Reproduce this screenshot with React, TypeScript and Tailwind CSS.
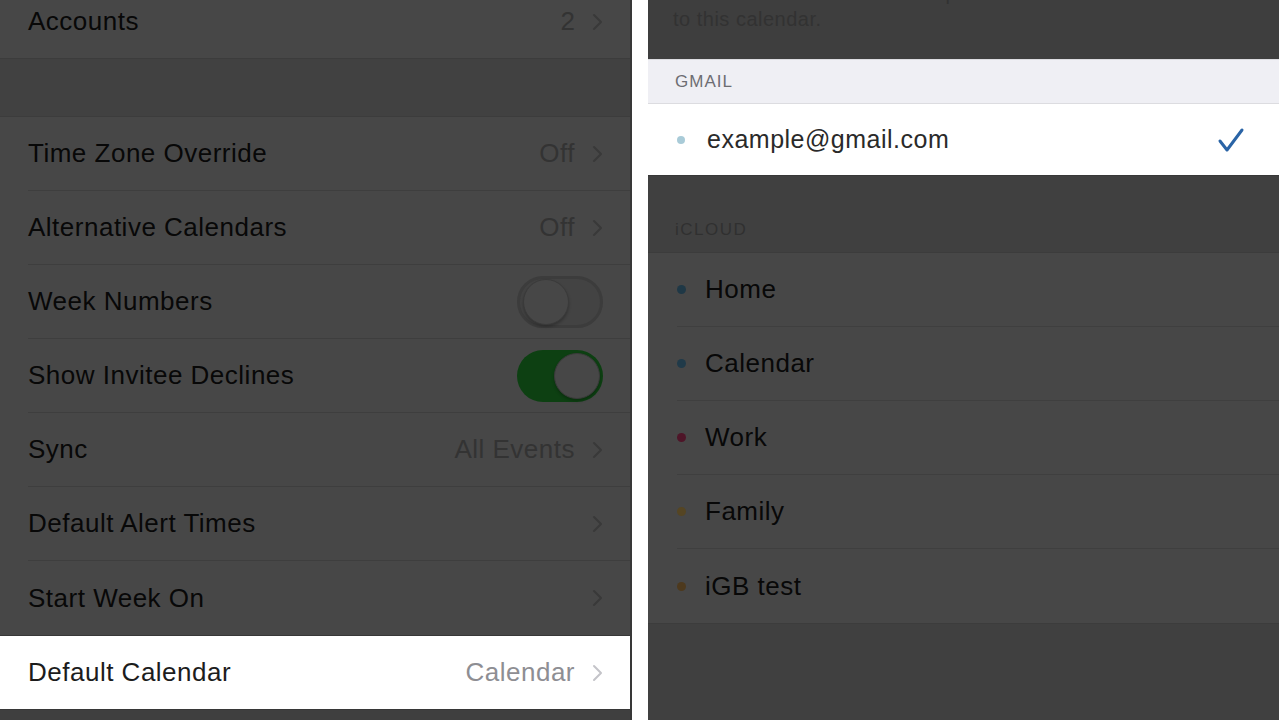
const FONT = { fontFamily: '"Liberation Sans", Arial, sans-serif' };

function Chevron({ color }: { color: string }) {
  return (
    <svg width="11" height="18" viewBox="0 0 11 18" className="ml-[17px] shrink-0">
      <polyline points="2,2 9,9 2,16" fill="none" stroke={color} strokeWidth="2" strokeLinecap="round" strokeLinejoin="round" />
    </svg>
  );
}

function Toggle({ on }: { on: boolean }) {
  return (
    <div
      className={
        "w-[86px] h-[52px] rounded-full p-[3px] flex items-center " +
        (on ? "bg-[#0d4012] justify-end" : "bg-[#434343] border-[3px] border-[#3c3c3c] justify-start")
      }
    >
      <div className="w-[46px] h-[46px] rounded-full bg-[#474747] border border-[#3a3a3a] shadow-[0_2px_3px_rgba(0,0,0,0.25)]" />
    </div>
  );
}

interface Row {
  label: string;
  detail?: string;
  chevron?: boolean;
  toggle?: boolean;
}

const rows: Row[] = [
  { label: "Time Zone Override", detail: "Off", chevron: true },
  { label: "Alternative Calendars", detail: "Off", chevron: true },
  { label: "Week Numbers", toggle: false },
  { label: "Show Invitee Declines", toggle: true },
  { label: "Sync", detail: "All Events", chevron: true },
  { label: "Default Alert Times", chevron: true },
  { label: "Start Week On", chevron: true },
];

function SettingsRow({ row, last }: { row: Row; last?: boolean }) {
  return (
    <div className="h-[74px] bg-[#474747] pl-[28px] flex shrink-0">
      <div
        className={
          "flex-1 flex items-center pr-[27px] " + (last ? "" : "border-b border-[#3e3e3e]")
        }
      >
        <span className="flex-1 text-[26px] tracking-[0.5px] text-[#080808]">{row.label}</span>
        {row.detail && <span className="text-[26px] tracking-[0.5px] text-[#333333]">{row.detail}</span>}
        {row.chevron && <Chevron color="#393939" />}
        {row.toggle !== undefined && <Toggle on={row.toggle} />}
      </div>
    </div>
  );
}

const calendars = [
  { name: "Home", color: "#1f3846" },
  { name: "Calendar", color: "#203a49" },
  { name: "Work", color: "#4e1528" },
  { name: "Family", color: "#554523" },
  { name: "iGB test", color: "#4d391d" },
];

export default function App() {
  return (
    <div className="w-[1279px] h-[720px] flex overflow-hidden bg-white" style={FONT}>
      {/* left: calendar settings */}
      <div className="w-[630px] h-full bg-[#3f3f3f] flex flex-col overflow-hidden">
        <div className="h-[74px] -mt-[15px] shrink-0 bg-[#474747] pl-[28px] pr-[27px] flex items-center border-b border-[#3c3c3c]">
          <span className="flex-1 text-[26px] tracking-[0.5px] text-[#080808]">Accounts</span>
          <span className="text-[26px] text-[#333333]">2</span>
          <Chevron color="#393939" />
        </div>
        <div className="h-[58px] bg-[#414141] border-b border-[#3c3c3c] shrink-0" />
        {rows.map((r, i) => (
          <SettingsRow key={r.label} row={r} last={i === rows.length - 1} />
        ))}
        <div className="h-[74px] bg-white pl-[28px] pr-[27px] flex items-center border-t border-[#373737] shrink-0">
          <span className="flex-1 text-[26px] tracking-[0.5px] text-[#1c1c1c]">Default Calendar</span>
          <span className="text-[26px] tracking-[0.5px] text-[#8e8e93]">Calendar</span>
          <Chevron color="#c4c4c9" />
        </div>
        <div className="flex-1 bg-[#3f3f3f] border-t border-[#373737]" />
      </div>

      {/* divider */}
      <div className="w-[18px] h-full bg-white border-l-2 border-[#383838]" />

      {/* right: default calendar picker */}
      <div className="flex-1 h-full bg-[#404040] flex flex-col overflow-hidden">
        <div className="h-[59px] shrink-0 bg-[#3e3e3e] pl-[25px] pr-[30px] overflow-hidden">
          <p className="-mt-[20px] text-[20px] tracking-[0.5px] leading-[26px] text-[#323232] whitespace-nowrap">
            Events created outside of a specific calendar will default
            <br />
            to this calendar.
          </p>
        </div>
        <div className="h-[45px] shrink-0 bg-[#efeff4] pl-[27px] flex items-center border-y border-[#dcdce0]">
          <span className="text-[17px] tracking-[1px] text-[#6d6d72]">GMAIL</span>
        </div>
        <div className="h-[72px] shrink-0 bg-white pl-[29px] pr-[34px] flex items-center border-b border-[#383838]">
          <span className="w-[8px] h-[8px] rounded-full bg-[#a9cbd8] mr-[22px]" />
          <span className="flex-1 text-[25px] tracking-[0.5px] text-[#2a2a2a]">example@gmail.com</span>
          <svg width="28" height="26" viewBox="0 0 28 26">
            <polyline points="3,14 10,23 25,3" fill="none" stroke="#2a64a6" strokeWidth="3" strokeLinecap="round" strokeLinejoin="round" />
          </svg>
        </div>
        <div className="h-[77px] shrink-0 bg-[#404040] pl-[27px] flex items-end pb-[10px] border-b border-[#3c3c3c]">
          <span className="text-[17px] tracking-[1.5px] text-[#303030]">iCLOUD</span>
        </div>
        {calendars.map((c, i) => (
          <div key={c.name} className="h-[74px] shrink-0 bg-[#474747] pl-[29px] flex">
            <div
              className={
                "flex-1 flex items-center " +
                (i === calendars.length - 1 ? "" : "border-b border-[#3f3f3f]")
              }
            >
              <span className="w-[9px] h-[9px] rounded-full mr-[19px]" style={{ backgroundColor: c.color }} />
              <span className="text-[26px] tracking-[0.5px] text-[#080808]">{c.name}</span>
            </div>
          </div>
        ))}
        <div className="flex-1 bg-[#404040] border-t border-[#3c3c3c]" />
      </div>
    </div>
  );
}
